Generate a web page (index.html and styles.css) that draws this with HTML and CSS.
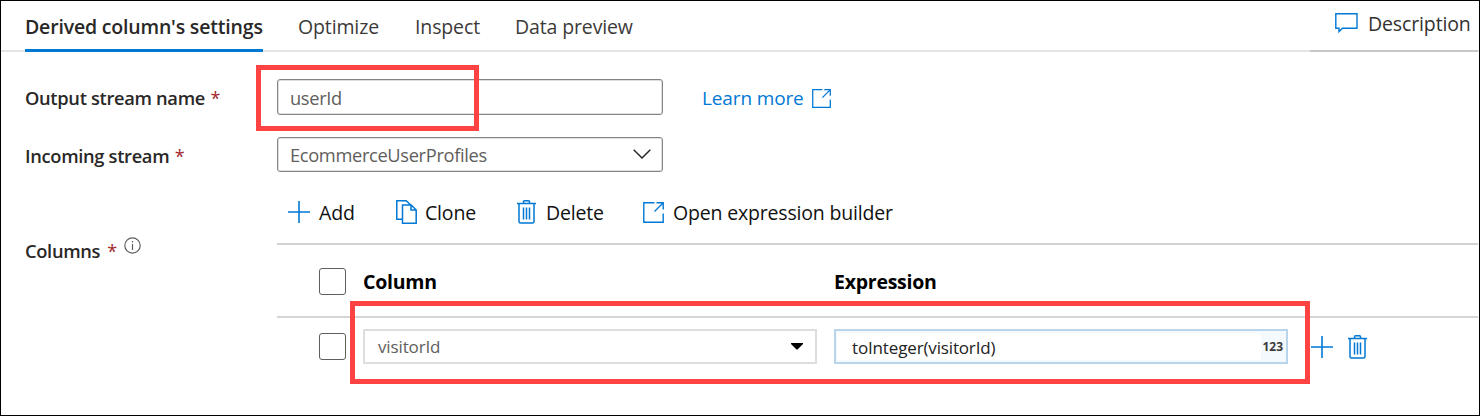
FILE: index.html
```html
<!DOCTYPE html>
<html lang="en">
<head>
<meta charset="utf-8">
<title>Derived column's settings</title>
<link rel="stylesheet" href="styles.css">
</head>
<body>
<svg class="defs" aria-hidden="true">
  <symbol id="plus" viewBox="0 0 22 22"><path d="M11 0v22M0 11h22" stroke-width="1.6"/></symbol>
  <symbol id="trash" viewBox="0 0 19 24"><path d="M0 3.6h19M6.500 3.200V1.800q0-1 1-1h4q1 0 1 1v1.400M2 4v17.500q0 1.500 1.500 1.500h12q1.500 0 1.500-1.500V4M6.500 7.500v12M9.500 7.500v12M12.500 7.500v12" stroke-width="1.500"/></symbol>
  <symbol id="open" viewBox="0 0 21 21"><path d="M11.500 .8H.8v19.400h19.400V11.500M13.500 .8h6.700v6.700M20 1l-8.500 8.500" stroke-width="1.400"/></symbol>
  <symbol id="copy" viewBox="0 0 21 24"><path d="M6 19.300H.8V.8h9.400l4.300 4M6.500 5h8.700l5 5v13.200H6.500zM15 5v5h5" stroke-width="1.500"/></symbol>
</svg>
<div class="panel">
  <header class="topbar">
    <nav class="tabs">
      <a class="tab active">Derived column's settings</a>
      <a class="tab optimize">Optimize</a>
      <a class="tab inspect">Inspect</a>
      <a class="tab preview">Data preview</a>
    </nav>
    <div class="description">
      <svg class="icon comment" viewBox="0 0 23 20"><path d="M.8 .8h21.200v14.400H7.500L4 18.600v-3.400H.8z" stroke-width="1.400"/></svg>
      <span>Description</span>
    </div>
  </header>
  <main class="form">
    <div class="row output">
      <label class="label">Output stream name <b class="req">*</b></label>
      <div class="field"><span>userId</span></div>
      <a class="learn"><span>Learn more</span><svg class="icon small-open"><use href="#open"/></svg></a>
    </div>
    <div class="row incoming">
      <label class="label">Incoming stream <b class="req">*</b></label>
      <div class="field"><span>EcommerceUserProfiles</span>
        <svg class="icon chevron" viewBox="0 0 18 10"><path d="M.7 .7L9 9l8.300-8.300" stroke-width="1.500"/></svg></div>
    </div>
    <div class="columns-row">
      <label class="label columns">Columns <b class="req">*</b>
        <svg class="icon info" viewBox="0 0 17 17"><circle cx="8.500" cy="8.500" r="7.700"/><path d="M8.500 7v6M8.500 4v1.500"/></svg></label>
      <section class="content">
        <div class="toolbar">
          <button class="tool add"><svg class="icon plus"><use href="#plus"/></svg><span>Add</span></button>
          <button class="tool clone"><svg class="icon copy"><use href="#copy"/></svg><span>Clone</span></button>
          <button class="tool delete"><svg class="icon trash"><use href="#trash"/></svg><span>Delete</span></button>
          <button class="tool builder"><svg class="icon open"><use href="#open"/></svg><span>Open expression builder</span></button>
        </div>
        <div class="grid head">
          <span class="check"></span><strong>Column</strong><strong>Expression</strong>
        </div>
        <div class="grid item">
          <span class="check"></span>
          <div class="combo"><span>visitorId</span><svg class="caret" viewBox="0 0 12 7"><path d="M0 0h12v1L6.500 6.500h-1L0 1z"/></svg></div>
          <div class="expression"><span class="code">toInteger(visitorId)</span><span class="type">123</span></div>
          <div class="actions"><svg class="icon plus"><use href="#plus"/></svg><svg class="icon trash"><use href="#trash"/></svg></div>
        </div>
      </section>
    </div>
  </main>
  <div class="mark mark-name"></div>
  <div class="mark mark-item"></div>
</div>
</body>
</html>
```
FILE: styles.css
```css
* { box-sizing: border-box; }
body { margin: 0; background: #fff; }
.defs { position: absolute; width: 0; height: 0; }
.panel {
  position: relative;
  width: 1480px;
  height: 416px;
  overflow: hidden;
  border: 1px solid #000;
  background: #fff;
  color: #323130;
  font: 19.500px/24px "Open Sans", "Noto Sans", sans-serif;
  letter-spacing: -.13px;
  white-space: nowrap;
}
.icon { display: block; flex: none; fill: none; stroke: #0078d4; overflow: visible; }
.topbar { display: flex; justify-content: space-between; height: 51px; padding-right: 1px; box-shadow: inset 0 -2px #e4e4e4; }
.tabs { display: flex; gap: 35px; padding-left: 24px; }
.tab { height: 51px; padding-top: 14px; color: #3b3a39; }
.active { width: 238px; color: #292827; font-weight: 600; border-bottom: 3px solid #0078d4; letter-spacing: -.18px; }
.optimize { width: 82px; }
.inspect { width: 65px; }
.description { display: flex; width: 168px; height: 51px; padding: 11px 0 0 25px; gap: 10px; border-bottom: 2px solid #c8c8c8; }
.comment { width: 23px; height: 20px; margin-top: 1px; }
.form { padding: 27px 1px 0 24px; }
.row { display: flex; align-items: center; height: 36px; margin-bottom: 22px; }
.incoming { height: 35px; margin-bottom: 21px; }
.label { width: 252px; flex: none; padding-top: 2px; color: #292827; font-weight: 600; font-size: 18.300px; letter-spacing: -.32px; }
.req { color: #a4262c; font-weight: 500; font-size: 18px; margin-left: 1px; }
.field { display: flex; align-items: center; justify-content: space-between; width: 386px; height: 36px; padding: 1px 11px 0 12px; border: 1px solid #858585; border-radius: 3px; box-shadow: inset 0 0 0 1px #dedede; color: #605e5c; font-size: 18.300px; letter-spacing: -.35px; }
.output .field { padding-top: 2px; }
.incoming .field { height: 35px; }
.chevron { width: 18px; height: 10px; margin-top: -2px; stroke: #292827; }
.learn { display: flex; align-items: center; gap: 8px; margin-left: 39px; padding-top: 2px; color: #0078d4; font-size: 19px; }
.small-open { width: 19px; height: 19px; }
.columns-row { display: flex; }
.columns { display: flex; padding-top: 46px; }
.columns .req { margin-left: 7px; }
.info { width: 17px; height: 17px; margin: -2px 0 0 7px; stroke: #605e5c; stroke-width: 1.200; }
.content { flex: 1; }
.toolbar { display: flex; height: 52px; padding: 7px 0 0 11px; border-bottom: 2px solid #d2d2d2; }
.tool { display: flex; align-items: center; height: 24px; padding: 0; border: 0; background: none; color: #111; font: inherit; letter-spacing: -.18px; }
.tool span { padding-top: 1px; }
.add { width: 108px; gap: 9px; }
.clone { width: 121px; gap: 8px; }
.delete { width: 126px; gap: 10px; }
.builder { gap: 9px; }
.plus { width: 22px; height: 22px; }
.copy { width: 21px; height: 24px; }
.trash { width: 19px; height: 24px; }
.open { width: 21px; height: 21px; }
.grid { display: grid; grid-template-columns: 27px 454px 454px 60px; column-gap: 17px; align-items: center; padding-left: 42px; }
.head { height: 73px; padding-top: 2px; border-bottom: 2px solid #d5d5d5; color: #000; }
.head strong { font-weight: 700; letter-spacing: -.25px; }
.item { height: 57px; }
.check { width: 27px; height: 27px; border: 1.500px solid #605e5c; border-radius: 3px; }
.combo, .expression { display: flex; align-items: center; justify-content: space-between; height: 35px; font-size: 17px; }
.combo { padding: 0 12px 0 13px; border: 2px solid #dedede; color: #605e5c; }
.caret { width: 12px; height: 7px; fill: #000; }
.expression { padding: 0 3px 0 1px; border: 2px solid #b9d5eb; background: #f4f9fe; color: #222; }
.code { flex: 1; height: 27px; margin-right: 1px; padding: 3px 0 0 15px; border-radius: 2px; background: #fff; letter-spacing: -.15px; }
.type { font-size: 12px; font-weight: 700; color: #3b3a39; letter-spacing: 0; }
.actions { display: flex; gap: 15px; align-items: center; margin-left: 6px; }
.mark { position: absolute; border: 5px solid #ff4343; pointer-events: none; }
.mark-name { left: 255px; top: 64px; width: 223px; height: 66px; }
.mark-item { left: 349px; top: 300px; width: 960px; height: 83px; }
```
